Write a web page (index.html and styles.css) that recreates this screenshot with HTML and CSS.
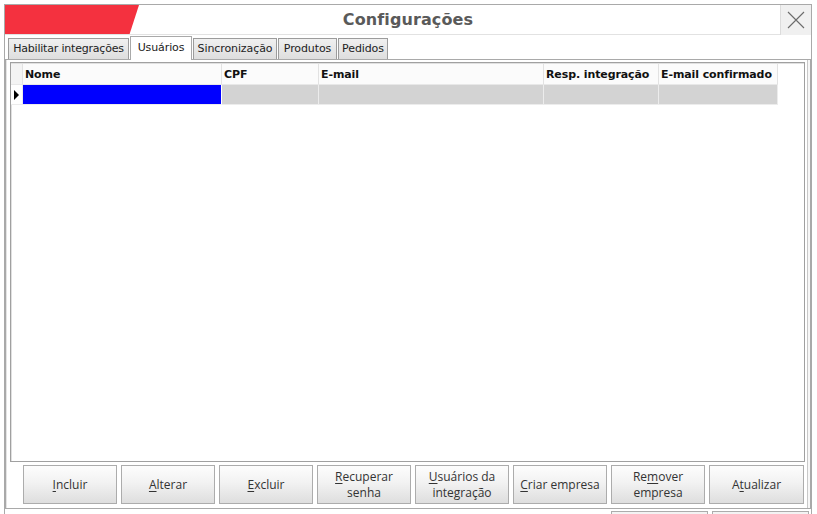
FILE: index.html
```html
<!DOCTYPE html>
<html lang="pt-BR">
<head>
<meta charset="utf-8">
<title>Configurações</title>
<link rel="stylesheet" href="styles.css">
</head>
<body>
<div class="window">
  <div class="titlebar">
    <div class="brand-wrap"><div class="brand"></div></div>
    <div class="title">Configurações</div>
    <div class="close-wrap">
      <div class="close">
        <svg width="18" height="18" viewBox="0 0 18 18"><path d="M1 1 L17 17 M17 1 L1 17" stroke="#6b6b6b" stroke-width="1.1" fill="none"/></svg>
      </div>
    </div>
  </div>
  <div class="tabs">
    <div class="tab t1">Habilitar integrações</div>
    <div class="tab t2 active">Usuários</div>
    <div class="tab t3">Sincronização</div>
    <div class="tab t4">Produtos</div>
    <div class="tab t5">Pedidos</div>
  </div>
  <div class="panel">
    <div class="grid">
      <div class="grid-head">
        <div class="cell ind"></div>
        <div class="cell c-nome">Nome</div>
        <div class="cell c-cpf">CPF</div>
        <div class="cell c-email">E-mail</div>
        <div class="cell c-resp">Resp. integração</div>
        <div class="cell c-conf">E-mail confirmado</div>
      </div>
      <div class="grid-row">
        <div class="cell ind"><span class="arrow"></span></div>
        <div class="cell c-nome selected"></div>
        <div class="cell c-cpf"></div>
        <div class="cell c-email"></div>
        <div class="cell c-resp"></div>
        <div class="cell c-conf"></div>
      </div>
    </div>
    <div class="buttons">
      <button class="btn"><u>I</u>ncluir</button>
      <button class="btn"><u>A</u>lterar</button>
      <button class="btn"><u>E</u>xcluir</button>
      <button class="btn"><u>R</u>ecuperar<br>senha</button>
      <button class="btn"><u>U</u>suários da<br>integração</button>
      <button class="btn"><u>C</u>riar empresa</button>
      <button class="btn">Re<u>m</u>over<br>empresa</button>
      <button class="btn btn-last">A<u>t</u>ualizar</button>
    </div>
  </div>
  <div class="footer">
    <div class="fbtn"></div>
    <div class="fbtn"></div>
  </div>
</div>
</body>
</html>
```

FILE: styles.css
```css
* { box-sizing: border-box; }
html, body { margin: 0; padding: 0; background: #ffffff; overflow: hidden; }
body { width: 817px; height: 514px; }

.window {
  margin: 4px 0 0 4px;
  width: 808px;
  height: 520px;
  border-top: 1px solid #a9a9a9;
  border-left: 1px solid #a9a9a9;
  border-right: 1px solid #a9a9a9;
  background: #ffffff;
}

.titlebar {
  display: grid;
  grid-template-columns: 1fr auto 1fr;
  align-items: stretch;
  height: 30px;
  border-bottom: 1px solid #e2e2e2;
}
.brand-wrap { display: flex; }
.brand {
  width: 134px;
  height: 29px;
  background: #f4313f;
  clip-path: polygon(0 0, 100% 0, 93% 100%, 0 100%);
}
.title {
  font-family: "DejaVu Sans", "Liberation Sans", sans-serif;
  font-weight: bold;
  font-size: 16px;
  color: #5a5a5a;
  line-height: 30px;
  letter-spacing: 0.1px;
}
.close-wrap { display: flex; justify-content: flex-end; }
.close {
  width: 31px;
  height: 30px;
  background: #f0f0f0;
  border-left: 1px solid #dcdcdc;
  display: flex;
  align-items: center;
  justify-content: center;
}

.tabs {
  display: flex;
  align-items: flex-end;
  height: 24px;
  padding-left: 3px;
}
.tab {
  font-family: "DejaVu Sans", sans-serif;
  font-size: 11px;
  color: #222;
  height: 21px;
  line-height: 19px;
  text-align: center;
  background: linear-gradient(#f0f0f0, #dedede);
  border: 1px solid #9c9c9c;
  border-bottom: none;
  margin-right: 1px;
  letter-spacing: -0.1px;
  flex: none;
}
.t1 { width: 121px; letter-spacing: -0.2px; }
.t2 { width: 62px; }
.t3 { width: 84px; }
.t4 { width: 59px; }
.t5 { width: 50px; }
.tab.active {
  background: #ffffff;
  height: 24px;
  line-height: 22px;
  position: relative;
  top: 1px;
  border-color: #a9a9a9;
  z-index: 2;
}

.panel {
  border: 1px solid #a9a9a9;
  padding: 2px 4px 4px 4px;
  height: 450px;
  display: flex;
  flex-direction: column;
  box-shadow: inset 1px 0 0 #e4e4e4, inset -2px 0 0 #f7f7f7, inset -3px 0 0 #c8c8c8;
}

.grid {
  height: 400px;
  border: 1px solid #a0a0a0;
  box-shadow: inset 1px 1px 0 #e0e0e0;
  margin-right: 1px;
  padding: 1px 0 0 0;
  background: #ffffff;
}
.grid-head, .grid-row { display: flex; }
.cell {
  font-family: "DejaVu Sans", sans-serif;
  font-weight: bold;
  font-size: 11px;
  color: #111;
  letter-spacing: -0.1px;
  flex: none;
  white-space: nowrap;
  overflow: hidden;
}
.grid-head .cell {
  height: 21px;
  line-height: 21px;
  padding-left: 2px;
  background: #fbfbfb;
  border-right: 1px solid #e2e2e2;
  border-bottom: 1px solid #e8e8e8;
}
.grid-head .cell.ind { background: #f4f4f4; }
.grid-row .cell {
  height: 20px;
  background: #d3d3d3;
  border-right: 1px solid #ececec;
  border-bottom: 1px solid #ececec;
}
.grid-row .cell.ind { background: #ffffff; display: flex; align-items: center; padding-left: 3px; }
.arrow {
  width: 0; height: 0;
  border-top: 5px solid transparent;
  border-bottom: 5px solid transparent;
  border-left: 5px solid #000;
}
.grid-row .cell.selected { background: #0000ff; border-right-color: #ffffff; }
.ind { width: 12px; }
.c-nome { width: 199px; }
.c-cpf { width: 97px; }
.c-email { width: 225px; }
.c-resp { width: 115px; }
.c-conf { width: 119px; }

.buttons {
  display: flex;
  gap: 4px;
  padding: 3px 0 0 13px;
}
.btn {
  width: 94px;
  height: 39px;
  padding: 0;
  border: 1px solid #acacac;
  border-radius: 0;
  background: linear-gradient(#fdfdfd 0%, #f2f2f2 45%, #dedede 100%);
  font-family: "Open Sans", "Noto Sans", sans-serif;
  font-size: 12px;
  line-height: 16px;
  color: #333;
  text-align: center;
}
.btn-last { width: 95px; }
.btn u { text-underline-offset: 2px; }

.footer {
  display: flex;
  justify-content: flex-end;
  gap: 4px;
  padding: 2px 2px 0 0;
}
.fbtn {
  width: 97px;
  height: 20px;
  border: 1px solid #acacac;
  background: #f3f3f3;
}
```
